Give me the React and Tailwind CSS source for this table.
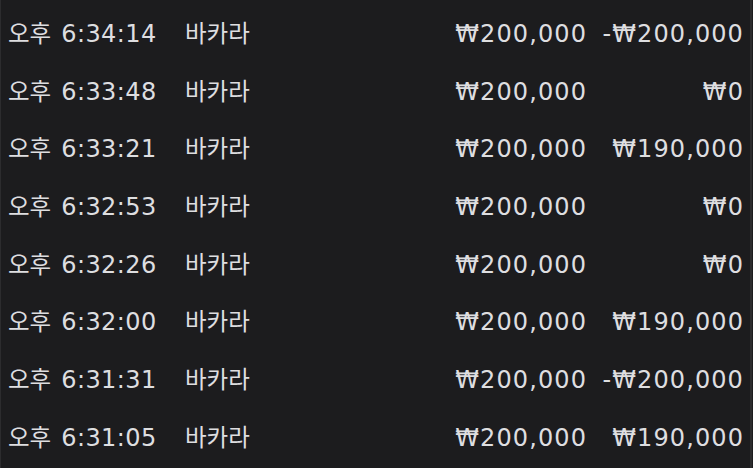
const rows = [
  { time: "6:34:14", game: "바카라", bet: "₩200,000", result: "-₩200,000" },
  { time: "6:33:48", game: "바카라", bet: "₩200,000", result: "₩0" },
  { time: "6:33:21", game: "바카라", bet: "₩200,000", result: "₩190,000" },
  { time: "6:32:53", game: "바카라", bet: "₩200,000", result: "₩0" },
  { time: "6:32:26", game: "바카라", bet: "₩200,000", result: "₩0" },
  { time: "6:32:00", game: "바카라", bet: "₩200,000", result: "₩190,000" },
  { time: "6:31:31", game: "바카라", bet: "₩200,000", result: "-₩200,000" },
  { time: "6:31:05", game: "바카라", bet: "₩200,000", result: "₩190,000" },
];

const ko = "text-[23.5px] font-['Noto_Sans_CJK_KR',sans-serif] tracking-normal";

export default function App() {
  return (
    <div className="h-[468px] w-[753px] overflow-hidden bg-[#1c1c1e] font-['DejaVu_Sans','Noto_Sans_CJK_KR',sans-serif] text-[24px] leading-[24px] text-[#dedee0]">
      <div className="mr-[1px] h-full border-l border-r-2 border-[#2c2c2e] pt-[5px]">
        {rows.map((r, i) => (
          <div key={i} className="flex h-[57.7px] items-baseline pt-[15px] pl-[7px] pr-[6px]">
            <div className="w-[177px] shrink-0 whitespace-nowrap">
              <span className={ko}>오후</span>
              <span className="ml-[10px] tracking-[0.4px]">{r.time}</span>
            </div>
            <div className={"flex-1 " + ko}>{r.game}</div>
            <div className="text-right tracking-[1.1px]">{r.bet}</div>
            <div className="w-[157px] text-right tracking-[1.1px]">{r.result}</div>
          </div>
        ))}
      </div>
    </div>
  );
}
